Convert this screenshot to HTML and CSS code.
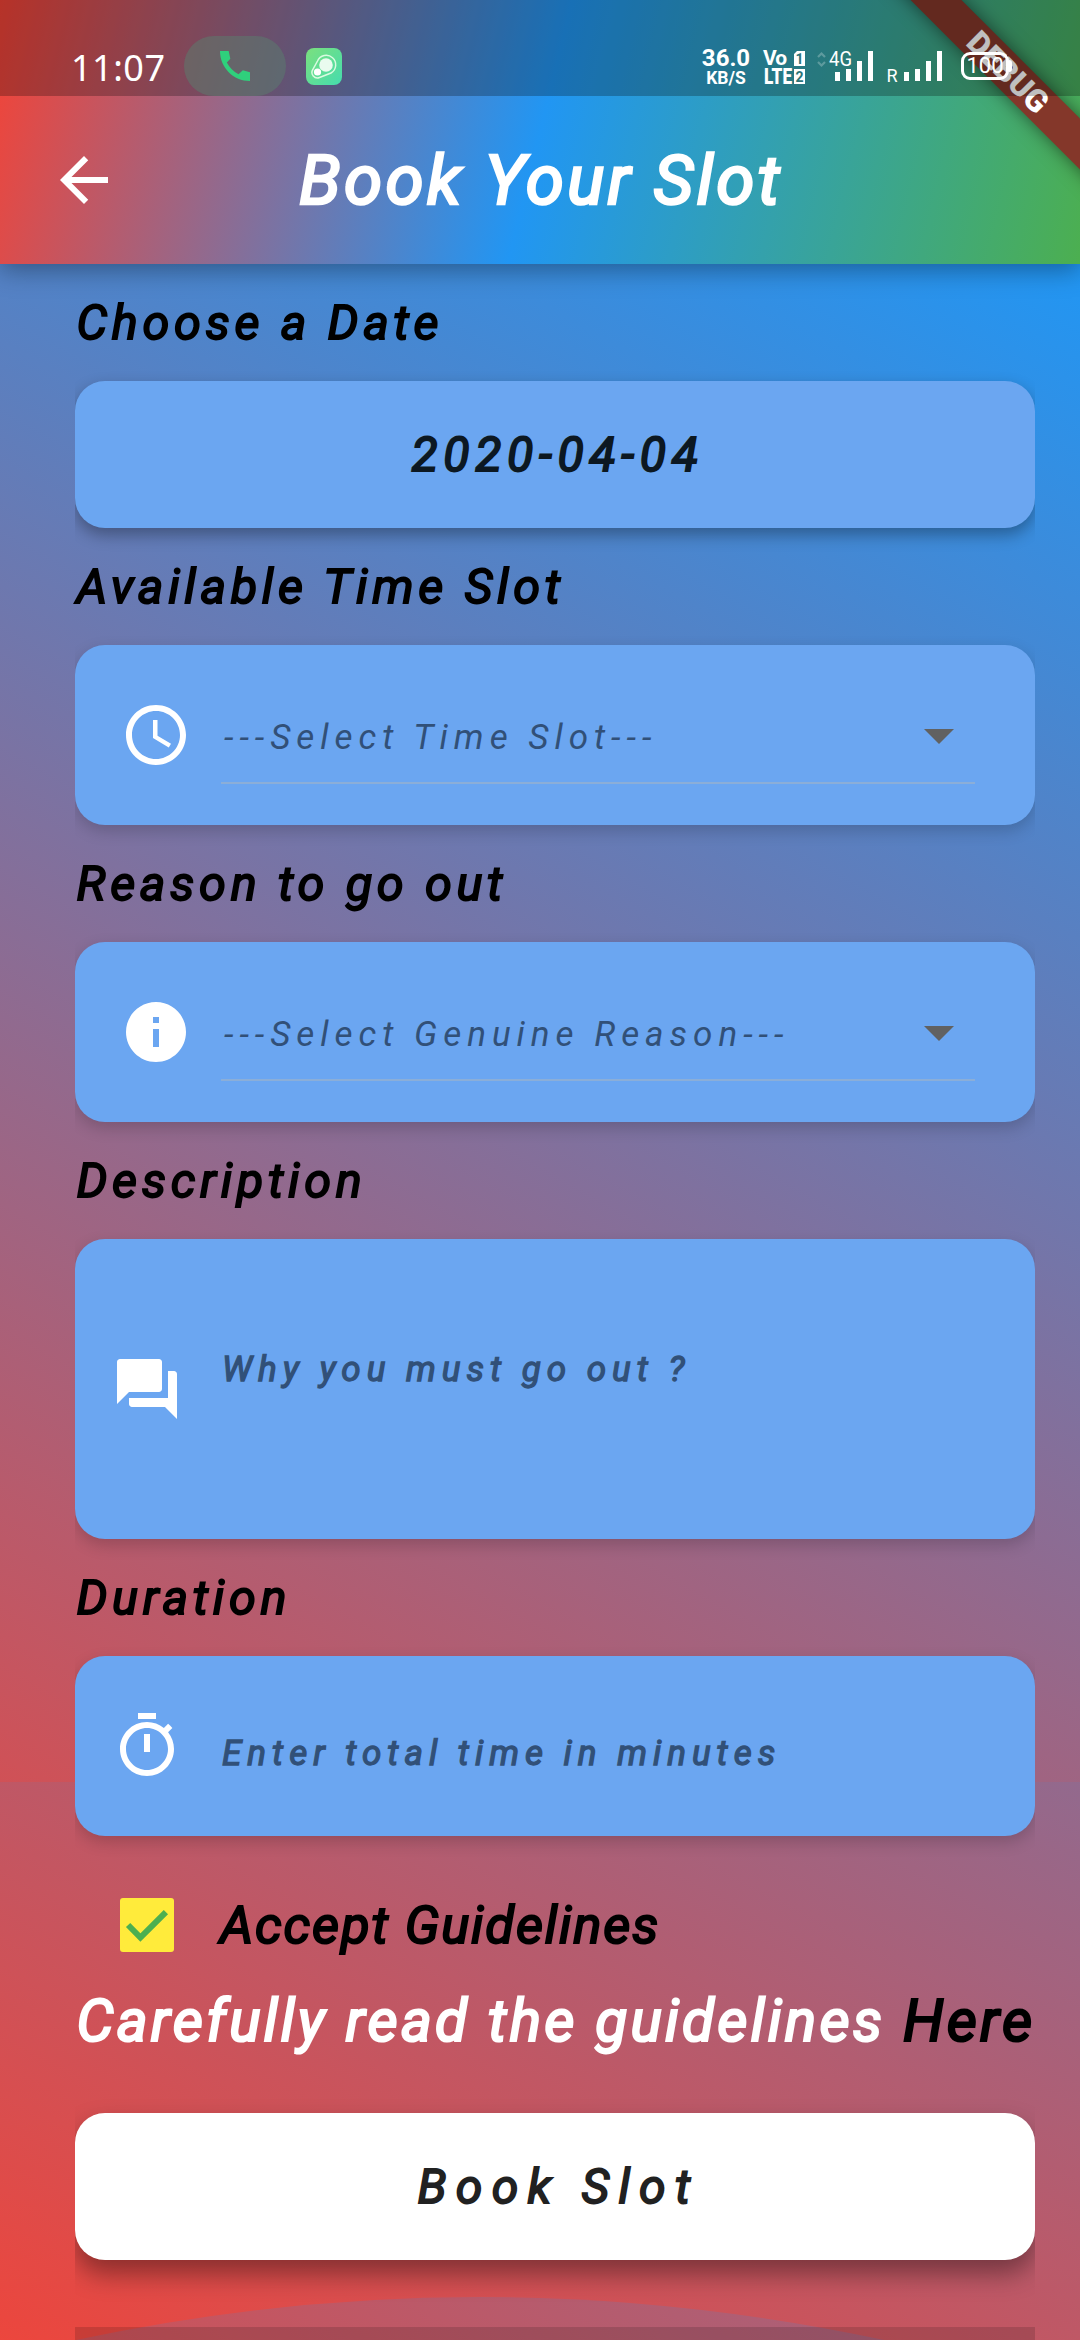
FILE: index.html
```html
<!DOCTYPE html>
<html lang="en">
<head>
<meta charset="utf-8">
<title>Book Your Slot</title>
<link rel="stylesheet" href="styles.css">
</head>
<body>
<div class="screen">
  <header class="top">
    <div class="status">
      <span class="time">11:07</span>
      <span class="call"><svg width="40" height="40" viewBox="0 0 24 24"><path fill="#2fd07c" d="M4.500 3H3c0 10 8 18 18 18v-5.200l-4.300-1.200-2.600 2.300c-3-1.500-5.500-4-7-7L9.200 7.700 8.200 3z"/></svg></span>
      <svg class="app" width="36" height="37" viewBox="0 0 36 37"><defs><linearGradient id="g" x1="0" y1="0" x2="1" y2="1"><stop offset="0" stop-color="#7be07e"/><stop offset="1" stop-color="#45dcae"/></linearGradient></defs><rect width="36" height="37" rx="8" fill="url(#g)"/><path d="M11.500 13A9.500 9.500 0 1 1 25 25L13.500 29.500A5.500 5.500 0 0 1 6.800 21.500Z" fill="none" stroke="#d9fbe0" stroke-width="1.500"/><circle cx="20" cy="17" r="6.800" fill="#e9fbef"/><circle cx="11.500" cy="24" r="3.600" fill="#fff"/></svg>
      <span class="net"><b>36.0</b><b class="unit">KB/S</b></span>
      <svg class="signals" width="200" height="60" viewBox="755 40 200 60" fill="#fff">
        <g font-family="Roboto, sans-serif" font-weight="700">
          <text x="763" y="65" font-size="21" textLength="24">Vo</text>
          <text x="764" y="84" font-size="22" textLength="28" lengthAdjust="spacingAndGlyphs" font-weight="900">LTE</text>
        </g>
        <path d="M797 51h8v15h-11v-12zM794 69h11v15h-11z"/>
        <g font-family="Roboto, sans-serif" font-size="14" font-weight="700" fill="#2b7478"><text x="795.500" y="63.500">1</text><text x="795.500" y="81.500">2</text></g>
        <path d="M818 57l3.500-3.500 3.500 3.500M818 62l3.500 3.500 3.500-3.500" fill="none" stroke="#fff" stroke-opacity=".25" stroke-width="2.200"/>
        <g font-family="Roboto, sans-serif"><text x="829" y="66" font-size="20" textLength="23" lengthAdjust="spacingAndGlyphs">4G</text><text x="886.500" y="82" font-size="18">R</text></g>
        <path d="M835 72h5v9h-5zM846 69h5v12h-5zM857 61h5v20h-5zM868 51h5v30h-5z"/>
        <path d="M904 72h5v9h-5zM915 69h5v12h-5zM926 61h5v20h-5zM937 51h5v30h-5z"/>
      </svg>
      <div class="battery">100</div><i class="nub"></i>
    </div>
    <div class="bar">
      <svg class="back" width="72" height="72" viewBox="0 0 24 24"><path fill="#fff" d="M20 11H7.830l5.590-5.590L12 4l-8 8 8 8 1.410-1.410L7.830 13H20v-2z"/></svg>
      <h1>Book Your Slot</h1>
    </div>
  </header>
  <main>
    <div class="layer back1"></div>
    <div class="layer back2"></div>
    <div class="layer wave"></div>
    <div class="form">
      <h2>Choose a Date</h2>
      <div class="card date">2020-04-04</div>
      <h2>Available Time Slot</h2>
      <div class="card field">
        <svg class="ic" width="72" height="72" viewBox="0 0 24 24" fill="#fff"><path d="M11.990 2C6.470 2 2 6.480 2 12s4.470 10 9.990 10C17.520 22 22 17.520 22 12S17.520 2 11.990 2zM12 20c-4.420 0-8-3.580-8-8s3.580-8 8-8 8 3.580 8 8-3.580 8-8 8z"/><path d="M12.500 7H11v6l5.250 3.150.750-1.230-4.500-2.670z"/></svg>
        <div class="select"><span>---Select Time Slot---</span><svg width="72" height="72" viewBox="0 0 24 24"><path fill="#616161" d="M7 10l5 5 5-5z"/></svg></div>
      </div>
      <h2>Reason to go out</h2>
      <div class="card field">
        <svg class="ic" width="72" height="72" viewBox="0 0 24 24" fill="#fff"><path d="M12 2C6.480 2 2 6.480 2 12s4.480 10 10 10 10-4.480 10-10S17.520 2 12 2zm1 15h-2v-6h2v6zm0-8h-2V7h2v2z"/></svg>
        <div class="select"><span>---Select Genuine Reason---</span><svg width="72" height="72" viewBox="0 0 24 24"><path fill="#616161" d="M7 10l5 5 5-5z"/></svg></div>
      </div>
      <h2>Description</h2>
      <div class="card input tall">
        <svg class="ic" width="72" height="72" viewBox="0 0 24 24" fill="#fff"><path d="M21 6h-2v9H6v2c0 .550.450 1 1 1h11l4 4V7c0-.550-.450-1-1-1zm-4 6V3c0-.550-.450-1-1-1H3c-.550 0-1 .450-1 1v14l4-4h10c.550 0 1-.450 1-1z"/></svg>
        <span>Why you must go out ?</span>
      </div>
      <h2>Duration</h2>
      <div class="card input">
        <svg class="ic" width="72" height="72" viewBox="0 0 24 24" fill="#fff"><path d="M15 1H9v2h6V1zm-4 13h2V8h-2v6zm8.030-6.610l1.420-1.420c-.430-.510-.900-.990-1.410-1.410l-1.420 1.420C16.070 4.740 14.120 4 12 4c-4.970 0-9 4.030-9 9s4.020 9 9 9 9-4.030 9-9c0-2.120-.740-4.070-1.970-5.610zM12 20c-3.870 0-7-3.130-7-7s3.130-7 7-7 7 3.130 7 7-3.130 7-7 7z"/></svg>
        <span>Enter total time in minutes</span>
      </div>
      <div class="accept">
        <svg width="54" height="54" viewBox="0 0 18 18"><rect width="18" height="18" rx="1" fill="#ffeb3b"/><path d="M2.700 9l4.100 4.200L15.300 4.700" fill="none" stroke="#4caf50" stroke-width="2"/></svg>
        <span>Accept Guidelines</span>
      </div>
      <p class="read">Carefully read the guidelines <b>Here</b></p>
      <div class="card book">Book Slot</div>
      <div class="next"></div>
    </div>
  </main>
  <div class="debug">DEBUG</div>
</div>
</body>
</html>
```
FILE: styles.css
```css
* { box-sizing: border-box; margin: 0; }
body { width: 1080px; height: 2340px; overflow: hidden; font-family: Roboto, "Noto Sans", sans-serif; }
svg { flex: none; }
.screen { position: relative; isolation: isolate; width: 1080px; height: 2340px; overflow: hidden; display: flex; flex-direction: column; }
.top { position: relative; height: 264px; background: linear-gradient(103.74deg, #f44336, #2196f3 50%, #4caf50); box-shadow: 0 6px 24px rgba(0,0,0,.35); }
.status { position: relative; z-index: 6; height: 96px; padding-left: 71px; display: flex; align-items: flex-start; color: #fff; background: rgba(0,0,0,.25); }
.time { width: 113px; margin-top: 42px; font: 36px/52px "Noto Sans", sans-serif; letter-spacing: .5px; }
.call { width: 102px; height: 60px; margin-top: 36px; border-radius: 30px; background: rgba(90,125,110,.5); display: flex; justify-content: center; align-items: center; }
.app { margin: 48px 0 0 20px; }
.net { width: 50px; margin: 47px 0 0 359px; display: flex; flex-direction: column; align-items: center; font-size: 24px; line-height: 23px; }
.unit { font-size: 17.500px; line-height: 16px; }
.signals { margin: 40px 0 0 4px; }
.battery { width: 48px; height: 28px; margin: 52px 0 0 6px; flex: none; border: 3px solid #fff; border-radius: 9px; font: 22px/22px Roboto, sans-serif; text-align: center; }
.nub { width: 3px; height: 12px; margin-top: 60px; background: #fff; border-radius: 0 3px 3px 0; }
.bar { height: 168px; display: flex; align-items: center; padding-left: 48px; }
h1, h2, .accept, .read, .date, .input, .book { font-weight: 400; font-style: italic; -webkit-text-stroke: .038em currentColor; white-space: nowrap; }
h1 { margin-left: 179px; font-size: 69px; color: #fff; letter-spacing: 3.300px; }
main { position: relative; z-index: -1; height: 2076px; overflow: hidden; }
.layer { position: absolute; left: 0; width: 1080px; }
.back1 { top: 0; height: 1950px; background: linear-gradient(29deg, #f44336, #2196f3); }
.back2 { top: 100px; height: 2076px; background: linear-gradient(27.5deg, #f44336, #2196f3); clip-path: inset(1418px 0 0 0); }
.wave { top: 448px; height: 2076px; background: linear-gradient(27.5deg, #f44336, #2196f3); clip-path: path("M76 1628Q480 1542 884 1628Z"); }
.form { position: relative; padding: 27px 45px 0 75px; }
h2 { height: 63px; line-height: 63px; padding-left: 1.500px; font-size: 48.500px; letter-spacing: 4.700px; color: #000; }
.card { height: 180px; margin: 27px 0; border-radius: 30px; background: #6ba6f1; box-shadow: 0 6px 16px rgba(0,0,0,.18); clip-path: inset(-50px 0 -60px 0); }
.date { height: 147px; padding-left: 5px; display: flex; align-items: center; justify-content: center; font-size: 48px; letter-spacing: 5.700px; color: #0c1822; box-shadow: 0 7px 16px rgba(0,0,0,.32); }
.field { padding: 0 60px 0 45px; display: flex; align-items: center; }
.select { margin-left: 29px; flex: 1; height: 96px; margin-top: 1px; border-bottom: 2px solid #8baed8; display: flex; align-items: center; font: italic 400 35px Roboto, sans-serif; letter-spacing: 6px; color: #315078; justify-content: space-between; white-space: nowrap; }
.select span { margin: 5px 0 0 3px; }
.input { padding-left: 36px; display: flex; align-items: center; font-size: 35px; letter-spacing: 6px; color: #315078; }
.input span { margin: 14px 0 0 39px; }
.tall { height: 300px; }
.tall span { margin-top: -40px; }
.accept { height: 54px; margin-top: 62px; padding-left: 45px; display: flex; align-items: center; gap: 46px; font-size: 52.500px; letter-spacing: 1.850px; }
.read { height: 80px; line-height: 80px; margin-top: 29px; padding-left: 1.500px; font-size: 58.500px; color: #fff; letter-spacing: 3.270px; }
.read b { font-weight: 400; color: #000; }
.book { height: 147px; margin-top: 52px; padding-left: 7px; background: #fff; display: flex; align-items: center; justify-content: center; font-size: 48px; letter-spacing: 9.300px; color: #212121; box-shadow: 0 14px 26px rgba(0,0,0,.38); }
.next { height: 13px; margin-top: 67px; background: rgba(0,0,0,.14); }
.debug { position: absolute; z-index: 3; left: 807px; top: 53px; width: 400px; height: 36px; padding-left: 3px; background: #84372a; transform: rotate(45deg); display: flex; justify-content: center; align-items: center; color: #fff; font: 900 31.500px Roboto, sans-serif; box-shadow: 0 0 18px rgba(0,0,0,.5); }
```
